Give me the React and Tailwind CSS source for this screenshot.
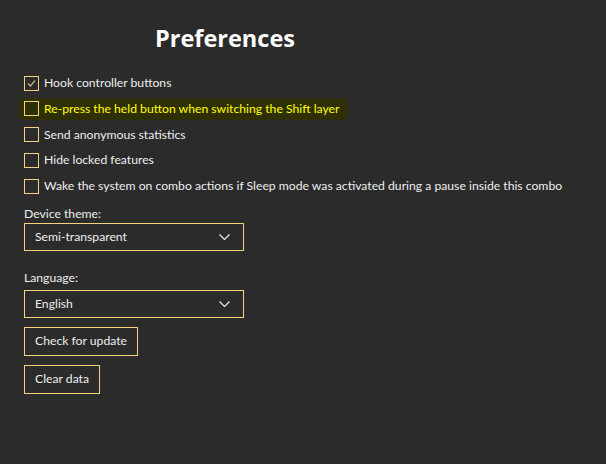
import React from 'react';

const options = [
    { label: 'Hook controller buttons', checked: true },
    { label: 'Re-press the held button when switching the Shift layer', highlight: true },
    { label: 'Send anonymous statistics' },
    { label: 'Hide locked features' },
    { label: 'Wake the system on combo actions if Sleep mode was activated during a pause inside this combo' },
];

const Check = ({ checked }) => (
    <span className="w-[15px] h-[15px] border border-[#f3d47a] flex items-center justify-center shrink-0">
        {checked && (
            <svg width="11" height="11" viewBox="0 0 11 11">
                <path d="M2 5.5 L4.5 8 L9 2.5" fill="none" stroke="#c9b380" strokeWidth="1.2" />
            </svg>
        )}
    </span>
);

const Select = ({ value }) => (
    <div className="w-[220px] h-[28px] border border-[#f3d47a] flex items-center justify-between pl-[10px] pr-[13px] text-[#eeeeee]">
        <span>{value}</span>
        <svg width="11" height="7" viewBox="0 0 11 7">
            <path d="M0.5 0.5 L5.5 5.5 L10.5 0.5" fill="none" stroke="#eeeeee" strokeWidth="1.2" />
        </svg>
    </div>
);

export default function App() {
    return (
        <div className="w-[606px] h-[464px] bg-[#2b2b2b] text-[#eeeeee] text-[12.2px] pl-6 pt-[20px]" style={{ fontFamily: 'Lato, "Open Sans", sans-serif' }}>
            <h1 className="w-[402px] text-center text-[23.5px] font-bold text-white leading-[36px] mb-[18px]" style={{ fontFamily: '"Open Sans", sans-serif' }}>Preferences</h1>

            <div className="flex flex-col gap-[7.75px]">
                {options.map((o) => (
                    <div key={o.label} className="h-[18px] flex items-center">
                        <div className={`flex items-center gap-[5px] -ml-[6px] pl-[6px] pr-[9px] h-[22px] ${o.highlight ? 'bg-[#2f2f06] text-[#ffff00] rounded-[6px]' : ''}`}>
                            <Check checked={o.checked} />
                            <span className="leading-[18px] whitespace-nowrap">{o.label}</span>
                        </div>
                    </div>
                ))}
            </div>

            <div className="mt-[10px] leading-[18px]">Device theme:</div>
            <div className="mt-0"><Select value="Semi-transparent" /></div>

            <div className="mt-[18px] leading-[18px]">Language:</div>
            <div className="mt-[3px]"><Select value="English" /></div>

            <div className="mt-[9px] flex flex-col items-start gap-[9px]">
                <button className="h-[29px] px-[10px] border border-[#f3d47a] text-[#eeeeee]">Check for update</button>
                <button className="h-[29px] px-[10px] border border-[#f3d47a] text-[#eeeeee]">Clear data</button>
            </div>
        </div>
    );
}
